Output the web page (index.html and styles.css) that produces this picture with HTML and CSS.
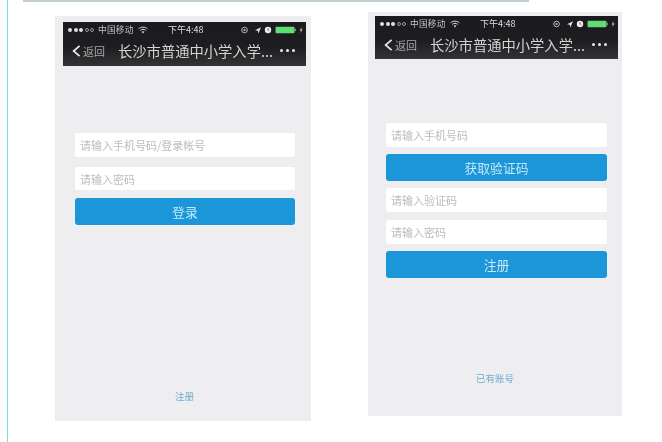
FILE: index.html
```html
<!DOCTYPE html>
<html lang="zh-CN">
<head>
<meta charset="utf-8">
<title>长沙市普通中小学入学</title>
<link rel="stylesheet" href="styles.css">
</head>
<body>
<svg class="defs" width="0" height="0" aria-hidden="true">
  <symbol id="status-icons" viewBox="0 0 66 10">
    <circle cx="3.5" cy="5" r="2.8" fill="none" stroke="#c8c8c8" stroke-width=".9"/>
    <circle cx="3.5" cy="5" r="1.1" fill="#c8c8c8"/>
    <path d="M14 5.2 20 2.2 17.4 8.4 16.8 5.8Z" fill="#e4e4e4"/>
    <circle cx="27" cy="5" r="3.2" fill="#eee"/>
    <path d="M27 3.4V5L28.2 5.6" stroke="#222" stroke-width=".7" fill="none"/>
    <rect x="34.5" y="1.8" width="19" height="6.4" rx="1" fill="#5fdc73"/>
    <rect x="53.8" y="3.8" width="1" height="2.4" fill="#aaa"/>
    <path d="M60.6 2 58.6 5.4H60L59.4 8 61.6 4.6H60.2Z" fill="#ccc"/>
  </symbol>
  <symbol id="wifi" viewBox="0 0 10 8">
    <path d="M.6 2.8C3 .6 7 .6 9.4 2.8M2.2 4.4C3.8 3 6.2 3 7.8 4.4" fill="none" stroke="#ddd" stroke-width="1"/>
    <path d="M3.6 5.7 5 7.6 6.4 5.7C5.6 5 4.4 5 3.6 5.7Z" fill="#ddd"/>
  </symbol>
</svg>
<div class="page">
  <div class="top-rule"></div>
  <main class="phones">
    <section class="phone phone-login">
      <header class="wechat-bar">
        <div class="status">
          <span class="signal"><i></i><i></i><i></i><i class="off"></i><i class="off"></i></span>
          <span class="carrier">中国移动</span>
          <svg class="wifi"><use href="#wifi"/></svg>
          <span class="clock">下午4:48</span>
          <svg class="status-icons"><use href="#status-icons"/></svg>
        </div>
        <nav class="nav">
          <svg class="chevron" viewBox="0 0 9 12"><path d="M7.6 .8 1.6 6 7.6 11.2" fill="none" stroke="#e8e8e8" stroke-width="1.7"/></svg>
          <span class="back">返回</span>
          <span class="title">长沙市普通中小学入学...</span>
          <span class="more"><i></i><i></i><i></i></span>
        </nav>
      </header>
      <form class="form form-login">
        <input class="field" placeholder="请输入手机号码/登录帐号">
        <input class="field field-short" placeholder="请输入密码">
        <button class="submit" type="button">登录</button>
      </form>
      <a class="foot-link">注册</a>
    </section>
    <section class="phone phone-register">
      <header class="wechat-bar">
        <div class="status">
          <span class="signal"><i></i><i></i><i></i><i class="off"></i><i class="off"></i></span>
          <span class="carrier">中国移动</span>
          <svg class="wifi"><use href="#wifi"/></svg>
          <span class="clock">下午4:48</span>
          <svg class="status-icons"><use href="#status-icons"/></svg>
        </div>
        <nav class="nav">
          <svg class="chevron" viewBox="0 0 9 12"><path d="M7.6 .8 1.6 6 7.6 11.2" fill="none" stroke="#e8e8e8" stroke-width="1.7"/></svg>
          <span class="back">返回</span>
          <span class="title">长沙市普通中小学入学...</span>
          <span class="more"><i></i><i></i><i></i></span>
        </nav>
      </header>
      <form class="form form-register">
        <input class="field" placeholder="请输入手机号码">
        <button class="submit" type="button">获取验证码</button>
        <input class="field" placeholder="请输入验证码">
        <input class="field field-lower" placeholder="请输入密码">
        <button class="submit" type="button">注册</button>
      </form>
      <a class="foot-link">已有账号</a>
    </section>
  </main>
</div>
</body>
</html>
```
FILE: styles.css
```css
* { box-sizing: border-box; }
html, body { margin: 0; padding: 0; background: #fff; }
body {
  width: 662px;
  height: 442px;
  overflow: hidden;
  font-family: "Noto Sans CJK SC", "Liberation Sans", sans-serif;
}
.defs { display: block; width: 0; height: 0; }
.page {
  height: 442px;
  margin-left: 7px;
  border-left: 1px solid #7adbe8;
}
.top-rule {
  width: 506px;
  height: 2px;
  margin-left: 15px;
  background: #c1cfd5;
}
.phones { display: flex; align-items: flex-start; }
.phone {
  display: flex;
  flex-direction: column;
  background: #eeeef0;
  filter: blur(.35px);
}
.phone-login { width: 256px; height: 405px; margin: 14px 0 0 47px; }
.phone-register { width: 254px; height: 404px; margin: 10px 0 0 57px; }
.wechat-bar {
  width: 243px;
  background: linear-gradient(#1b1b1f, #1d1d20 55%, #333335);
  color: #ddd;
}
.phone-login .wechat-bar { height: 44px; margin: 6px 0 0 8px; }
.phone-register .wechat-bar { height: 43px; margin: 4px 0 0 7px; }
.status {
  display: flex;
  align-items: center;
  height: 15px;
  padding-left: 5px;
  font-size: 8.7px;
  line-height: 14px;
  color: #c4c4c4;
  white-space: nowrap;
}
.signal { display: flex; flex: none; gap: 1.6px; width: 30px; }
.signal i { flex: none; width: 4px; height: 4px; border-radius: 50%; background: #e0e0e0; }
.signal i.off { background: none; border: .7px solid #999; }
.carrier { flex: none; width: 40px; letter-spacing: .2px; }
.wifi { flex: none; width: 10px; height: 8px; }
.clock { flex: none; margin-left: 20px; width: 38px; font-size: 9px; color: #ddd; font-family: "Noto Sans CJK SC", "Liberation Sans", sans-serif; }
.status-icons { flex: none; width: 66px; height: 10px; margin-left: 35px; }
.nav {
  display: flex;
  align-items: center;
  height: 27px;
  padding-left: 9px;
}
.chevron { width: 9px; height: 12px; }
.back { margin-left: 2px; width: 35px; font-size: 11px; color: #a8a8a8; }
.title { width: 162px; font-size: 14.3px; color: #d4d4d4; white-space: nowrap; }
.more { display: flex; gap: 2.6px; }
.more i { width: 3.3px; height: 3.3px; border-radius: 50%; background: #e8e8e8; }
.form { display: flex; flex-direction: column; }
.form-login { width: 220px; margin: 67px 0 0 20px; gap: 8px; }
.form-register { width: 221px; margin: 64px 0 0 18px; gap: 7px; }
.field {
  display: block;
  width: 100%;
  height: 24px;
  padding: 0 5px;
  border: 0;
  border-radius: 2px;
  background: #fff;
  font: 11px "Noto Sans CJK SC", sans-serif;
  outline: 0;
}
.field::placeholder { color: #bcbcbc; opacity: 1; }
.field-short { height: 23px; margin-top: 2px; }
.field-lower { margin-top: 1px; }
.submit {
  display: block;
  width: 100%;
  height: 27px;
  padding: 0;
  border: 0;
  border-radius: 3px;
  background: #1b96d8;
  color: #c6e8f8;
  font: 12.8px "Noto Sans CJK SC", sans-serif;
}
.foot-link {
  margin-top: auto;
  text-align: center;
  font-size: 9.5px;
  color: #6fabd2;
}
.phone-login .foot-link { margin-bottom: 18px; padding-left: 3px; }
.phone-register .foot-link { margin-bottom: 31px; }
```
